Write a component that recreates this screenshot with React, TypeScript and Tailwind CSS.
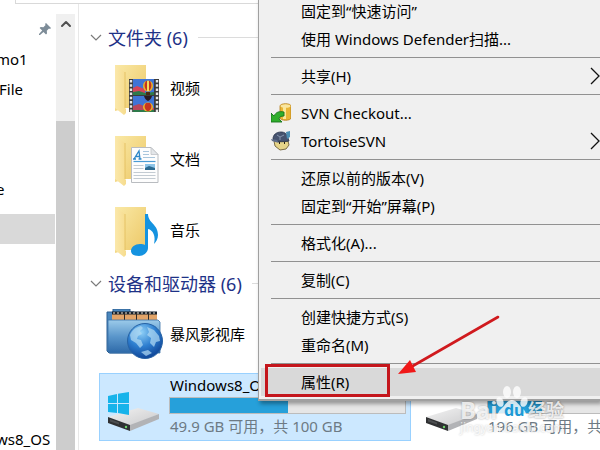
import React from 'react';
import { ChevronUp } from 'lucide-react';

const FolderShape: React.FC<{ id: string; children: React.ReactNode }> = ({ id, children }) => (
  <svg viewBox="0 0 44 50" className="w-11 h-[50px]" aria-hidden="true">
    <defs>
      <linearGradient id={`${id}-back`} x1="0" y1="0" x2="1" y2="1">
        <stop offset="0" stopColor="#fae9a6" />
        <stop offset="1" stopColor="#ecc765" />
      </linearGradient>
      <linearGradient id={`${id}-front`} x1="0" y1="0" x2="1" y2="0">
        <stop offset="0" stopColor="#fbe8ab" />
        <stop offset="1" stopColor="#f6dc8e" />
      </linearGradient>
    </defs>
    <path d="M0 0H31V43H11L0 46Z" fill={`url(#${id}-back)`} />
    <path d="M0 0L10 7V43L11 44V48L9 50L0 43Z" fill={`url(#${id}-front)`} />
    <path d="M10 7V43" stroke="#e2bd5c" strokeWidth=".8" />
    {children}
  </svg>
);

const VideoIcon = () => (
  <FolderShape id="video">
    <rect x="14" y="14" width="30" height="33" fill="#3c3c3c" />
    <rect x="18" y="14" width="21" height="16" fill="#3f74d6" />
    <rect x="18" y="31" width="21" height="16" fill="#3f74d6" />
    <path d="M18 23l4-2 5 2 3 1v6H18z" fill="#d5455a" />
    <path d="M18 27l6-1 6 2 9-1v3H18z" fill="#2e7a4a" />
    <path d="M18 41l6-2 5 2 10 2v4H18z" fill="#b8475c" />
    <path d="M18 45h21v2H18z" fill="#2e7a4a" />
    <ellipse cx="33" cy="21" rx="5" ry="5.500" fill="#e8b52c" />
    <path d="M31 16c-2 3-2 7 1 10h2c3-3 3-7 1-10z" fill="#c7341f" />
    <path d="M32 16h2v10h-2z" fill="#f2dc5e" />
    <path d="M31 27h4v3h-4z" fill="#4b2a12" />
    <ellipse cx="33" cy="42" rx="5" ry="4.500" fill="#e8b52c" />
    <path d="M31 38c-2 3-2 5 1 8h2c3-3 3-5 1-8z" fill="#c7341f" />
    <path d="M29 31h8c-1 3-2 4-4 5-2-1-3-2-4-5z" fill="#2a1b22" />
    <path d="M16 15v32M42 15v32" stroke="#e8e8e8" strokeWidth="2.400" strokeDasharray="2.500 1.700" />
  </FolderShape>
);

const DocumentIcon = () => (
  <FolderShape id="document">
    <path d="M16.500 11.500H36l7 7V46.500H16.500z" fill="#fdfdfd" stroke="#b9bcc0" />
    <path d="M36 11.500v7h7z" fill="#e3e6e9" stroke="#b9bcc0" strokeWidth=".7" />
    <path d="M19 23l5-8 1 8M20.500 20.500h4.500M18 23h3M23.500 23h3" fill="none" stroke="#2d87c8" strokeWidth="1.300" />
    <path d="M28 15.500h6M28 18.500h6M28 21.500h12" stroke="#a9c6dc" />
    <path d="M18.500 25.500h22" stroke="#4a9bd4" strokeWidth="1.200" />
    <path d="M18.500 29.500h10M18.500 32.500h10M18.500 36.500h22M18.500 39.500h22M18.500 42.500h22" stroke="#c3cbd2" />
    <rect x="30" y="28" width="10" height="6" fill="#8cc4e8" />
    <path d="M30 32l4-2 6 2v2H30z" fill="#2b6a90" />
  </FolderShape>
);

const MusicIcon = () => (
  <FolderShape id="music">
    <path
      d="M30 7h3c0 9 10 10 10 21 0 4-2 7-4 9 2-8-1-14-6-15v19c0 4-4 8-9 8-5 0-8-2-8-5 0-4 4-7 9-7 2 0 4 0 5 1z"
      fill="#1593e0"
    />
  </FolderShape>
);

const LibraryIcon = () => (
  <svg viewBox="0 0 58 50" className="w-[58px] h-[50px]" aria-hidden="true">
    <defs>
      <linearGradient id="lib-body" x1="0" y1="0" x2="0" y2="1">
        <stop offset="0" stopColor="#9ccbea" />
        <stop offset=".5" stopColor="#5a96cb" />
        <stop offset="1" stopColor="#2d69a8" />
      </linearGradient>
      <radialGradient id="lib-globe" cx=".4" cy=".25" r=".8">
        <stop offset="0" stopColor="#8fd0f7" />
        <stop offset=".5" stopColor="#2e7fd0" />
        <stop offset="1" stopColor="#0c3f91" />
      </radialGradient>
    </defs>
    <path d="M1 3h6V0h17v3h4v41H3l-2-2z" fill="#4a87bd" stroke="#2c5f92" />
    <rect x="6" y="3" width="45" height="9" fill="#e2a468" />
    <path d="M6 4h45" stroke="#16202b" strokeWidth="3" />
    <path d="M7 4h44" stroke="#f2e8d8" strokeWidth="1.200" strokeDasharray="2 2" />
    <path d="M18.500 4v8M30.500 4v8M42.500 4v8" stroke="#2f2a25" />
    <path d="M2 11h50l2 2v31H4l-2-2z" fill="url(#lib-body)" stroke="#3a71a8" strokeWidth=".8" />
    <circle cx="39" cy="32" r="17.500" fill="url(#lib-globe)" stroke="#2763a5" />
    <path
      d="M24 26c2-5 6-8 11-9l2 2-3 3 2 3-4 2-1 3 4 1 2 5-3 3-4-5-5-3zM41 18l7 3 5 6 1 5-4 1-2 5-4-4 1-5-4-3 2-3zM35 43l7-2 4 3-6 3z"
      fill="#b4dcf4"
      opacity=".7"
    />
  </svg>
);

const DriveIcon: React.FC<{ id: string; windows?: boolean }> = ({ id, windows }) => (
  <svg viewBox="0 0 52 40" className="w-[52px] h-10 shrink-0" aria-hidden="true">
    <defs>
      <linearGradient id={`${id}-top`} x1="0" y1="0" x2="1" y2="1">
        <stop offset="0" stopColor="#f3f3f3" />
        <stop offset="1" stopColor="#c9c9cb" />
      </linearGradient>
    </defs>
    <path d="M0 25L30 16l21 6-29 12z" fill={`url(#${id}-top)`} />
    <path d="M22 33l29-11v5L22 39z" fill="#b2b3b6" />
    <path d="M0 25l22 8v6L0 31z" fill="#303133" />
    <path d="M2 27l9 3.500v2L2 29.500z" fill="#4c4e50" />
    <circle cx="18" cy="35" r="1.200" fill="#6ed36a" />
    {windows && (
      <path d="M0 4l9-2v9H0zM10 1.800L21 0v11H10zM0 12h9v9l-9-1zM10 12h11v11l-11-2z" fill="#17b3ea" />
    )}
  </svg>
);

const PinIcon = () => (
  <svg viewBox="0 0 12 12" className="w-3 h-3" aria-hidden="true">
    <path d="M7 0l5 5-1 1-1-.4-2.200 2.200.2 2.700-1 1L4.500 8.900 1 12H0v-1l3.200-3.400L.6 5l1-1 2.800.2L6.600 2 6 1z" fill="#7d8c98" />
  </svg>
);

const SvnCheckoutIcon = () => (
  <svg viewBox="0 0 20 20" className="w-5 h-5" aria-hidden="true">
    <path d="M9 3c0-3 11-3 11 0v12c0 3-11 3-11 0z" fill="#e9b536" stroke="#b27c18" strokeWidth=".8" />
    <path d="M12 3h3v13h-3z" fill="#fbe79a" />
    <ellipse cx="14.500" cy="3" rx="5" ry="1.800" fill="#f9e6a0" />
    <path d="M0 10l3 3c2-4 5-5 10-4v4c-3 0-5 1-5 3l3 3H0z" fill="#2fae2c" stroke="#15731a" strokeWidth=".9" />
  </svg>
);

const TortoiseIcon = () => (
  <svg viewBox="0 0 20 20" className="w-5 h-5" aria-hidden="true">
    <path d="M3 10h14l1 4-3 4-6 1-5-4z" fill="#e6d489" stroke="#6e5f38" strokeWidth=".9" />
    <path d="M2 8c0-4 3-7 8-7 4 0 6 2 7 6l1 3c-5 1-11 1-14 0z" fill="#46536f" stroke="#28324a" strokeWidth=".8" />
    <path d="M0 8l6 1 2 3-7-2z" fill="#5d6c8b" />
    <path d="M15 1l4-1v6l-3 2z" fill="#4d8fb4" />
    <path d="M6 4l3 2 4-2M9 6v3" stroke="#8594ad" fill="none" />
    <path d="M8 12h1M13 12h1" stroke="#2b2415" strokeWidth="2" />
  </svg>
);

type MenuEntry = { label: string; icon?: React.ReactNode; submenu?: boolean; active?: boolean };

const menuGroups: MenuEntry[][] = [
  [{ label: '固定到“快速访问”' }, { label: '使用 Windows Defender扫描...' }],
  [{ label: '共享(H)', submenu: true }],
  [
    { label: 'SVN Checkout...', icon: <SvnCheckoutIcon /> },
    { label: 'TortoiseSVN', icon: <TortoiseIcon />, submenu: true },
  ],
  [{ label: '还原以前的版本(V)' }, { label: '固定到“开始”屏幕(P)' }],
  [{ label: '格式化(A)...' }],
  [{ label: '复制(C)' }],
  [{ label: '创建快捷方式(S)' }, { label: '重命名(M)' }],
  [{ label: '属性(R)', active: true }],
];

const folders = [
  { name: '视频', icon: <VideoIcon /> },
  { name: '文档', icon: <DocumentIcon /> },
  { name: '音乐', icon: <MusicIcon /> },
];

const drives = [
  { id: 'system', name: 'Windows8_OS', info: '49.9 GB 可用，共 100 GB', used: 50, windows: true, selected: true },
  { id: 'data', name: '', info: '196 GB 可用，共', used: 23, windows: false, selected: false },
];

const SectionHeader: React.FC<{ title: string }> = ({ title }) => (
  <h2 className="flex items-center h-[29px] text-lg text-[#1e3287] whitespace-nowrap">
    <svg viewBox="0 0 12 8" className="w-3 h-2 ml-[3px] mr-1.5" aria-hidden="true">
      <path d="M1 1l5 5 5-5" fill="none" stroke="#7a7a7a" strokeWidth="1.200" />
    </svg>
    {title}
    <span className="flex-1 h-px ml-2.5 bg-[#dcdcdc]" />
  </h2>
);

const Sidebar = () => (
  <aside className="flex w-[79px] shrink-0 border-r border-[#e8e8e8] pt-2.5 pr-[3px] overflow-hidden">
    <nav className="flex-1 mr-px">
      <div className="flex h-[30px] items-center justify-end pr-1">
        <PinIcon />
      </div>
      <div className="h-[30px] leading-[30px] -indent-1">mo1</div>
      <div className="h-[30px] leading-[30px] -indent-px">File</div>
      <div className="h-[30px] mt-[70px] leading-[30px] -indent-1">e</div>
      <div className="h-[30px] mt-2.5 bg-[#d9d9d9]" />
      <div className="h-[30px] mt-[180px] leading-[30px] -indent-1">ws8_OS</div>
    </nav>
    <div className="w-[19px] bg-[#f0f0f0] flex flex-col">
      <button aria-label="Scroll up" className="h-[107px] shrink-0 flex justify-center items-start pt-0.5">
        <ChevronUp className="w-4 h-4 text-[#505050]" strokeWidth={3} />
      </button>
      <div className="flex-1 bg-[#cdcdcd]" />
    </div>
  </aside>
);

const ContextMenu = () => (
  <div
    role="menu"
    className="absolute left-[258px] right-0 -top-[3px] border-l border-b-2 border-[#a0a0a0] bg-[#f0f0f0] pl-0.5 pb-[3px] shadow-[2px_3px_4px_rgba(0,0,0,0.35)]"
  >
    {menuGroups.map((group, index) => (
      <div key={index}>
        {index > 0 && <div role="separator" className="ml-2.5 my-1 h-px bg-[#919191]" />}
        {group.map((item) => (
          <button
            key={item.label}
            role="menuitem"
            className={`flex w-full h-7 items-center text-left text-black whitespace-nowrap ${item.active ? 'bg-[#d9d9d9]' : ''}`}
          >
            <span className="w-10 pl-2.5 shrink-0">{item.icon}</span>
            <span className="flex-1">{item.label}</span>
            {item.submenu && (
              <svg viewBox="0 0 10 18" className="w-2.5 h-[18px]" aria-hidden="true">
                <path d="M1 1l8 8-8 8" fill="none" stroke="#111" strokeWidth="1.300" />
              </svg>
            )}
          </button>
        ))}
      </div>
    ))}
  </div>
);

const Watermark = () => (
  <div className="absolute left-[460px] top-[384px] w-[110px] pt-4 text-white/80 font-bold whitespace-nowrap pointer-events-none">
    <svg viewBox="0 0 110 40" className="absolute left-0 top-0 w-[110px] h-10" aria-hidden="true">
      <g fill="#fff" opacity=".8">
        <ellipse cx="40" cy="18" rx="3.500" ry="5" transform="rotate(-20 40 18)" />
        <ellipse cx="47" cy="8" rx="4" ry="6" />
        <ellipse cx="57" cy="8" rx="4" ry="6" />
        <ellipse cx="64" cy="18" rx="3.500" ry="5" transform="rotate(20 64 18)" />
        <path d="M52 16c5 0 7 6 11 9 5 4 4 11-4 11-3 0-5-1-7-1s-4 1-7 1c-8 0-9-7-4-11 4-3 6-9 11-9z" />
      </g>
    </svg>
    <div className="relative flex items-center h-5 text-2xl">
      <span className="w-11 [text-shadow:0_0_2px_rgba(0,0,0,0.35)]">Bai</span>
      <span className="w-6 text-base text-[#1d9ad6]">du</span>
      <span className="text-lg [text-shadow:0_0_2px_rgba(0,0,0,0.45)]">经验</span>
    </div>
    <div className="relative text-xs font-normal [text-shadow:0_0_2px_rgba(0,0,0,0.25)]">jingyan.baidu.com</div>
  </div>
);

const App: React.FC = () => {
  return (
    <div className="relative flex flex-col h-screen overflow-hidden bg-white text-[15px] leading-5 text-black font-['Noto_Sans','Noto_Sans_CJK_SC',sans-serif]">
      {/* Address bar bottom edge */}
      <div className="h-1 shrink-0 ml-[15px] border-l border-b border-[#d9d9d9]" />

      <div className="flex flex-1 min-h-0">
        <Sidebar />

        <main className="flex-1 min-w-0 pt-[19px] pl-2 overflow-hidden">
          <SectionHeader title="文件夹 (6)" />
          {folders.map((folder) => (
            <div key={folder.name} className="flex items-center h-[71px] pl-7">
              <div className="w-[55px] pt-1">{folder.icon}</div>
              <span>{folder.name}</span>
            </div>
          ))}

          <div className="mt-1">
            <SectionHeader title="设备和驱动器 (6)" />
          </div>
          <div className="flex items-center h-[71px] pl-[19px]">
            <div className="w-16">
              <LibraryIcon />
            </div>
            <span>暴风影视库</span>
          </div>

          {/* Drives */}
          <div className="flex gap-1.5 mt-1 pl-3">
            {drives.map((drive) => (
              <div
                key={drive.id}
                className={`flex w-[312px] h-[68px] shrink-0 items-end border pl-2 pr-1 pb-1 ${drive.selected ? 'bg-[#cce8ff] border-[#99d1ff]' : 'border-transparent'}`}
              >
                <div className="w-[61px] shrink-0 pb-1">
                  <DriveIcon id={drive.id} windows={drive.windows} />
                </div>
                <div className="flex-1 whitespace-nowrap">
                  <div className="h-5 pl-px">{drive.name}</div>
                  <div className="h-[17px] my-0.5 bg-[#e6e6e6] border border-[#bcbcbc]">
                    <div className="h-full bg-[#26a0da]" style={{ width: `${drive.used}%` }} />
                  </div>
                  <div className="pl-px text-[#6d7a84]">{drive.info}</div>
                </div>
              </div>
            ))}
          </div>
        </main>
      </div>

      <ContextMenu />

      {/* Highlighted menu entry and the arrow pointing at it */}
      <div className="absolute left-[265px] top-[364px] w-[125px] h-[33px] border-3 border-[#c4161c] pointer-events-none" />
      <svg viewBox="0 0 102 60" className="absolute left-[398px] top-[315px] w-[102px] h-[60px] pointer-events-none" aria-hidden="true">
        <path d="M100 2L13 52" stroke="#d01a1e" strokeWidth="2.600" strokeLinecap="round" />
        <path d="M0 59L12 45l6 12z" fill="#f01818" />
      </svg>

      <Watermark />
    </div>
  );
};

export default App;
